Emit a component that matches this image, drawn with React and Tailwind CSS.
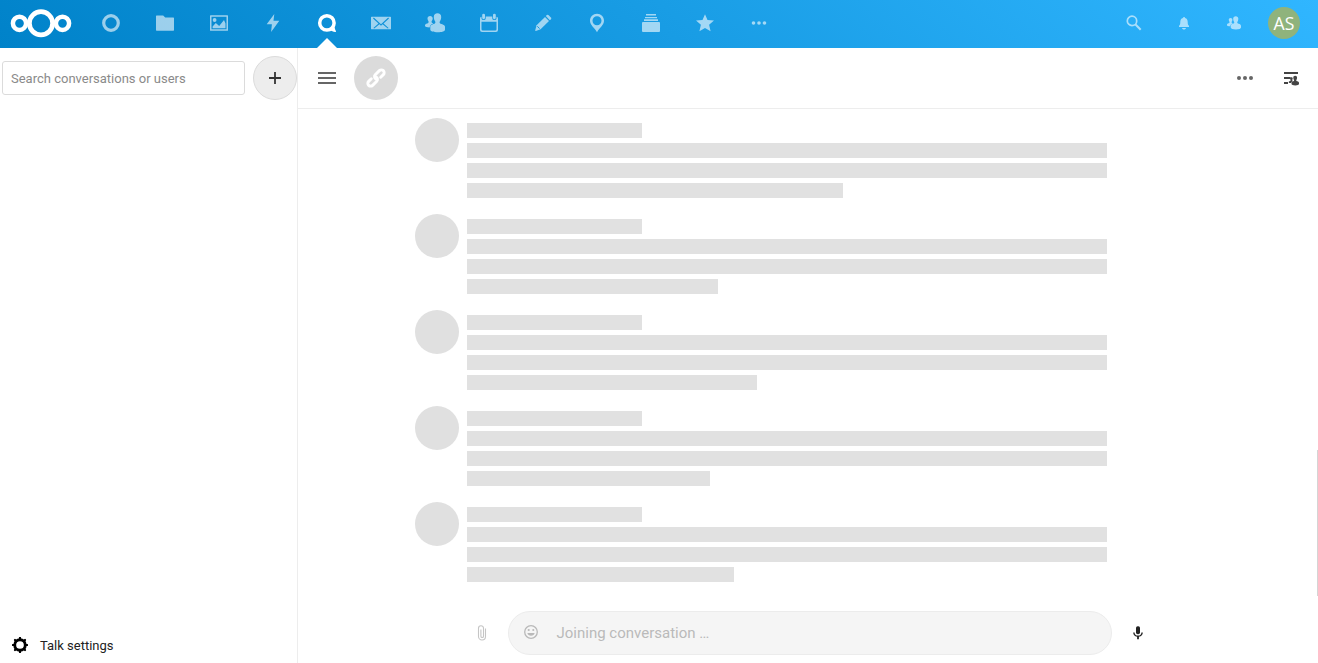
import React from 'react';

const Icon = ({ size = 20, box = 20, children, className = '' }) => (
  <svg width={size} height={size} viewBox={`0 0 ${box} ${box}`} fill="currentColor" className={`shrink-0 ${className}`}>
    {children}
  </svg>
);

const People = () => (
  <>
    <path d="M12.500.3c-2.200 0-3.700 1.400-3.700 3.600 0 1.900.6 3.400 1.400 4.500.4.700.2 1.500-.3 2.100-1.400.8-4.600 1.300-4.600 3.200v2.700c0 1.800 3.300 2.800 7.500 2.800s7.200-1 7.200-2.800v-2.600c0-2-3.400-2.500-4.900-3.300-.5-.6-.7-1.400-.3-2.100.8-1.100 1.400-2.600 1.400-4.500C16.200 1.700 14.700.3 12.500.3z" />
    <path d="M5.100 2.900C3.500 2.900 2.500 3.900 2.500 5.400c0 1.200.4 2.100 1 2.800.2.700.1 1.200-.3 1.700C2.200 10.500 0 10.800 0 12.100v1c0 .8 1.900 1.400 4.600 1.400.2-2.600 2.100-3.500 3.900-4.300-.8-.1-1.500-.3-1.800-.7-.2-.4-.2-.9 0-1.400.6-.7 1-1.600 1-2.700C7.700 3.900 6.700 2.900 5.100 2.900z" />
  </>
);

const navIcons = {
  dashboard: (
    <Icon><circle cx="10" cy="10" r="7.300" fill="none" stroke="currentColor" strokeWidth="3.200" /></Icon>
  ),
  files: (
    <Icon><path d="M1.600 2.500h6.600l2 2H18.400q.6 0 .6.600v12q0 .6-.6.600H1.600q-.6 0-.6-.6v-14q0-.6.600-.6z" /></Icon>
  ),
  photos: (
    <Icon>
      <path fillRule="evenodd" d="M1.600 2.200h16.800q.6 0 .6.600v14.400q0 .6-.6.600H1.600q-.6 0-.6-.6V2.800q0-.6.600-.6zM2.500 3.700v12.600h15V3.700z" />
      <circle cx="5.600" cy="7" r="1.900" />
      <path d="M3.600 15.200v-1.700l3.200-3.400 3.400 2.900L15 7l1.500 3.400v4.800z" />
    </Icon>
  ),
  activity: (
    <Icon><path d="M11.300.9 3.700 11.200h5.200L8.100 19 16.300 7.700h-5.800z" /></Icon>
  ),
  talk: (
    <Icon>
      <circle cx="9.900" cy="9.900" r="7.200" fill="none" stroke="currentColor" strokeWidth="3.500" />
      <path d="M17.200 11.500c.1 2.300.6 4.500 1.700 6.600.3.600 0 1-.7.900-2.100-.2-3.700-.8-5.200-1.700z" />
    </Icon>
  ),
  mail: (
    <Icon>
      <path fillRule="evenodd" d="M.6 3.700h18.800q.6 0 .6.600v11.400q0 .6-.6.600H.6q-.6 0-.6-.6V4.300q0-.6.6-.6zM2 5.400l5.500 5L2.400 15l.8.600 5.200-4.400 1.600 1.500 1.600-1.500 5.200 4.400.8-.6-5.100-4.600 5.500-5-.8-.8L10 11.300 2.800 4.600z" />
    </Icon>
  ),
  contacts: <Icon><People /></Icon>,
  calendar: (
    <Icon>
      <path fillRule="evenodd" d="M4.600.8q1.400 0 1.400 1.300v3q0 1.100-1.400 1.100T3.200 5.100v-3Q3.200.8 4.600.8zM15.400.8q1.400 0 1.400 1.300v3q0 1.100-1.400 1.100T14 5.100v-3Q14 .8 15.400.8zM2.500 3.700v1.700q0 1.500 2.100 1.500t2.100-1.500V3.400h6.600v2q0 1.500 2.100 1.500t2.100-1.500V3.700q1.500.2 1.500 1.700v11.500q0 2.100-2.100 2.100H3.100Q1 19 1 16.900V5.400q0-1.500 1.500-1.700zM2.500 8.800v7.400q0 1.300 1.300 1.300h12.400q1.300 0 1.300-1.300V8.800z" />
    </Icon>
  ),
  notes: (
    <Icon>
      <path d="M3.600 12.300 12 3.900l4 4-8.400 8.400-4.800 1.700q-.7 0-.6-.7z" />
      <path d="M12.800 3.100l1-1q1-.7 1.900.1l2.200 2.200q.8.900.1 1.900l-1.200 1z" />
      <path d="M4.300 13.300l2.300 2.300" stroke="#179ae6" strokeWidth="1" fill="none" />
    </Icon>
  ),
  maps: (
    <Icon><path fillRule="evenodd" d="M10 .8c4 0 7 3.100 7 7 0 4.200-4.500 7-7 11.400C7.500 14.800 3 12 3 7.800c0-3.900 3-7 7-7zM10 3.300a4.500 4.500 0 1 0 0 9 4.500 4.500 0 0 0 0-9z" /></Icon>
  ),
  deck: (
    <Icon>
      <path d="M2 9h16q1 0 1 1v8q0 1-1 1H2q-1 0-1-1v-8q0-1 1-1z" />
      <path d="M3 6.300h14v1.800H3zM4 4h12v1.200H4zM5 1h10v1.500H5z" />
    </Icon>
  ),
  bookmarks: (
    <Icon><path d="M10 1.200l2.500 5.900 6.500.5-4.900 4.200 1.500 6.500L10 14.900l-5.600 3.400 1.500-6.500L1 7.600l6.500-.5z" /></Icon>
  ),
  more: (
    <Icon><circle cx="4.500" cy="10" r="1.800" /><circle cx="10" cy="10" r="1.800" /><circle cx="15.500" cy="10" r="1.800" /></Icon>
  ),
};

const Logo = () => (
  <svg width="62" height="30" viewBox="0 0 62 30" fill="none" stroke="#fff">
    <circle cx="9.500" cy="15.300" r="6.600" strokeWidth="4.500" />
    <circle cx="31" cy="15.300" r="11.600" strokeWidth="4.700" />
    <circle cx="52.500" cy="15.300" r="6.600" strokeWidth="4.500" />
  </svg>
);

function Header() {
  return (
    <header className="flex h-12 shrink-0 items-center bg-[linear-gradient(40deg,#0082c9_0%,#30b6ff_100%)] text-white">
      <div className="flex h-12 w-[84px] items-center pb-0.5 pl-[10px]"><Logo /></div>
      <nav className="flex">
        {Object.entries(navIcons).map(([name, icon]) => (
          <div key={name} className="relative flex h-12 w-[54px] items-center justify-center pb-0.5">
            <div className={name === 'talk' ? '' : 'opacity-60'}>{icon}</div>
            {name === 'talk' && (
              <div className="absolute bottom-0 left-[17px] h-0 w-0 border-x-[10px] border-b-[10px] border-x-transparent border-b-white" />
            )}
          </div>
        ))}
      </nav>
      <div className="ml-auto flex items-center pb-0.5 pr-[9px]">
        <div className="flex w-[50px] justify-center opacity-60">
          <Icon size={16} box={16}>
            <circle cx="6" cy="5.900" r="4.700" fill="none" stroke="currentColor" strokeWidth="1.700" />
            <path d="M9.300 9.300l5.400 5.400" stroke="currentColor" strokeWidth="2.100" />
          </Icon>
        </div>
        <div className="flex w-[50px] justify-center opacity-60">
          <Icon size={16} box={16}>
            <path d="M8 2c-.6 0-1 .4-1 .9C4.900 3.400 4.300 5 4.300 7c0 2.200-.4 3-1.300 3.700V12h10v-1.300c-.9-.7-1.300-1.500-1.300-3.700 0-2-.6-3.600-2.700-4.100C9 2.400 8.600 2 8 2zM6 13c0 .9.900 1.500 2 1.500s2-.6 2-1.500z" />
          </Icon>
        </div>
        <div className="flex w-[50px] justify-center opacity-60"><Icon size={14}><People /></Icon></div>
        <div className="flex w-[50px] justify-center">
          <div className="flex h-8 w-8 items-center justify-center rounded-full bg-[#8fb37c] font-['Open_Sans',sans-serif] text-[17.600px]">AS</div>
        </div>
      </div>
    </header>
  );
}

function Sidebar() {
  return (
    <aside className="flex w-[298px] shrink-0 flex-col border-r border-[#ededed]">
      <div className="flex items-center pl-0.5 pt-2">
        <input
          placeholder="Search conversations or users"
          className="h-[34px] w-[243px] rounded-[3px] border border-[#dbdbdb] px-2 text-[13px] outline-none placeholder:text-[#8a8a8a]"
        />
        <button className="ml-2 flex h-11 w-11 items-center justify-center rounded-full border border-[#dbdbdb] bg-[#ededed] text-[#333]">
          <Icon size={12} box={12}><path d="M5.100 0h1.800v5.100H12v1.800H6.900V12H5.100V6.900H0V5.100h5.100z" /></Icon>
        </button>
      </div>
      <div className="mt-auto flex h-[35px] items-center pl-3 text-[13px] text-[#222]">
        <svg width="16" height="16" viewBox="0 0 16 16" fill="none" stroke="#000" className="-mt-0.5">
          <circle cx="8" cy="8" r="5.300" strokeWidth="2.900" />
          {[0, 45, 90, 135, 180, 225, 270, 315].map((angle) => (
            <path key={angle} d="M8 2.500V.9" strokeWidth="2.200" strokeLinecap="round" transform={`rotate(${angle} 8 8)`} />
          ))}
        </svg>
        <span className="ml-3">Talk settings</span>
      </div>
    </aside>
  );
}

function TopBar() {
  return (
    <div className="flex h-[61px] shrink-0 items-center border-b border-[#ededed] pl-5">
      <div className="flex w-[18px] flex-col gap-[3px]">
        <div className="h-0.5 bg-[#666]" />
        <div className="h-0.5 bg-[#666]" />
        <div className="h-0.5 bg-[#666]" />
      </div>
      <div className="ml-[18px] flex h-11 w-11 items-center justify-center rounded-full bg-[#dbdbdb]">
        <svg width="22" height="22" viewBox="0 0 22 22" fill="none" stroke="#fff" strokeWidth="2.900" strokeLinecap="round">
          <g transform="rotate(-45 11 11)">
            <path d="M7.200 8.200H3.400a2.800 2.800 0 0 0 0 5.600h5.900a2.700 2.700 0 0 0 2.500-3.400" />
            <path d="M14.800 13.800h3.800a2.800 2.800 0 0 0 0-5.600h-5.900a2.700 2.700 0 0 0-2.500 3.400" />
          </g>
        </svg>
      </div>
      <div className="ml-auto flex items-center gap-[30px] pr-[19px] text-[#666]">
        <Icon size={16} box={16}><circle cx="2" cy="8" r="2" /><circle cx="8" cy="8" r="2" /><circle cx="14" cy="8" r="2" /></Icon>
        <Icon size={16} box={16} className="text-[#444]">
          <path d="M1 2h14v2H1zM1 7h6.500v2H1zM1 12h4v2H1z" />
          <g transform="translate(5.800 5.700) scale(.51)"><People /></g>
        </Icon>
      </div>
    </div>
  );
}

const lastLineWidths = ['w-[376px]', 'w-[251px]', 'w-[290px]', 'w-[243px]', 'w-[266.500px]'];

function Placeholder({ lastWidth }) {
  return (
    <li className="flex h-24 gap-2">
      <div className="h-11 w-11 shrink-0 rounded-full bg-[#e0e0e0]" />
      <div className="flex flex-col gap-[5px] pt-[5px]">
        <div className="h-[15px] w-[175px] bg-[#e1e1e1]" />
        <div className="h-[15px] w-[640px] bg-[#e1e1e1]" />
        <div className="h-[15px] w-[640px] bg-[#e1e1e1]" />
        <div className={`h-[15px] bg-[#e1e1e1] ${lastWidth}`} />
      </div>
    </li>
  );
}

function Composer() {
  return (
    <div className="flex h-[67px] shrink-0 items-start pl-[176px] pt-[15px]">
      <div className="flex h-11 w-4 items-center justify-center">
        <svg width="10" height="16" viewBox="0 0 10 16" fill="none" stroke="#c5c5c5" strokeWidth="1.100">
          <path d="M8.500 3.500v8A3.500 3.500 0 0 1 1.500 11.500V3.200A2.500 2.500 0 0 1 6.500 3.200v8A1.300 1.300 0 0 1 3.900 11.200V4.500" />
        </svg>
      </div>
      <div className="ml-[18px] flex h-11 w-[604px] items-center rounded-full border border-[#ececec] bg-[#f5f5f5] pl-[14px]">
        <svg width="16" height="16" viewBox="0 0 16 16" className="-mt-0.5" fill="#b9b9b9">
          <circle cx="8" cy="8" r="6.300" fill="none" stroke="#b9b9b9" strokeWidth="1.300" />
          <circle cx="5.700" cy="6" r="1.050" /><circle cx="10.300" cy="6" r="1.050" />
          <path d="M4.300 9h7.400q-.8 2.800-3.700 2.800T4.300 9z" />
        </svg>
        <span className="ml-[17.500px] text-[15px] text-[#bababa]">Joining conversation …</span>
      </div>
      <div className="ml-[18px] flex h-11 w-4 items-center justify-center text-[#222]">
        <Icon size={16} box={16}>
          <rect x="6" y="1.300" width="4" height="8" rx="1.700" />
          <path d="M3.200 7.500h1.400a3.400 3.100 0 0 0 6.800 0h1.400a4.800 4.300 0 0 1-3.900 4.250V14.300H7.100v-2.550A4.800 4.300 0 0 1 3.200 7.500z" />
        </Icon>
      </div>
    </div>
  );
}

export default function App() {
  return (
    <div className="flex h-screen flex-col overflow-hidden bg-white font-[Roboto,sans-serif] text-[#222]">
      <Header />
      <div className="flex min-h-0 flex-1">
        <Sidebar />
        <main className="flex min-w-0 flex-1 flex-col">
          <TopBar />
          <div className="relative min-h-0 flex-1 overflow-hidden">
            <ul className="flex flex-col pl-[117px] pt-[9px]">
              {lastLineWidths.map((w) => <Placeholder key={w} lastWidth={w} />)}
            </ul>
            <div className="absolute bottom-0 right-0 h-[146px] w-px bg-[#d5d5d5]" />
          </div>
          <Composer />
        </main>
      </div>
    </div>
  );
}
